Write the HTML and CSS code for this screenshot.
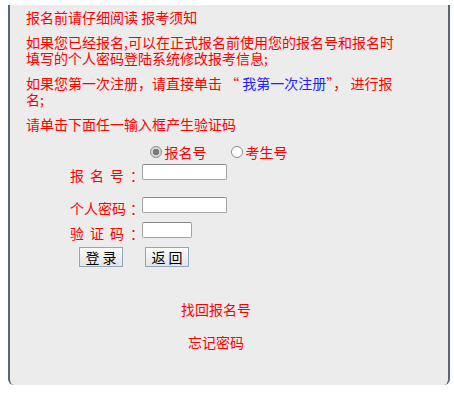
FILE: index.html
```html
<!DOCTYPE html>
<html lang="zh-CN">
<head>
    <meta charset="UTF-8">
    <title>考生登录</title>
    <link rel="stylesheet" href="styles.css">
</head>
<body>
    <div class="panel">
        <div class="notice">
            <p>报名前请仔细阅读 报考须知</p>
            <p>如果您已经报名,可以在正式报名前使用您的报名号和报名时填写的个人密码登陆系统修改报考信息;</p>
            <p><span>如果您第一次注册，请直接单击 “ </span><a href="#" class="reg">我第一次注册</a><span>”， 进行报</span><br>名;</p>
            <p>请单击下面任一输入框产生验证码</p>

            <div class="radios">
                <label><input type="radio" name="kind" checked>报名号</label>
                <label><input type="radio" name="kind">考生号</label>
            </div>

            <form class="login">
                <div class="row row-first">
                    <label class="lbl"><span class="spread">报名号</span>：</label>
                    <input type="text" class="field">
                </div>
                <div class="row row-second">
                    <label class="lbl"><span class="plain">个人密码</span>：</label>
                    <input type="password" class="field">
                </div>
                <div class="row row-third">
                    <label class="lbl"><span class="spread">验证码</span>：</label>
                    <input type="text" class="field short">
                </div>
                <div class="btns">
                    <button type="button">登 录</button>
                    <button type="button">返 回</button>
                </div>
            </form>

            <div class="links">
                <a href="#">找回报名号</a>
                <a href="#">忘记密码</a>
            </div>
        </div>
    </div>
</body>
</html>
```

FILE: styles.css
```css
* {
    box-sizing: border-box;
    margin: 0;
    padding: 0;
}

body {
    background: #ffffff;
    font-family: "Noto Sans CJK SC", sans-serif;
    font-size: 14px;
    color: #ff0000;
}

.panel {
    width: 442px;
    height: 380px;
    margin: 5px 0 0 8px;
    padding: 4px 0 0 16px;
    background: #ececec;
    border-left: 2px solid #56677c;
    border-right: 2px solid #56677c;
    border-radius: 0 0 6px 6px;
}

.notice {
    width: 380px;
}

.notice p {
    line-height: 16px;
    margin-bottom: 9px;
}

.reg {
    color: #1f1fff;
    text-decoration: none;
}

.radios {
    display: flex;
    justify-content: center;
    gap: 24px;
    margin-top: 12px;
    padding-left: 5px;
    line-height: 16px;
}

.radios label {
    display: flex;
    align-items: center;
    gap: 3px;
}

.radios input {
    appearance: none;
    width: 12px;
    height: 12px;
    border: 1px solid #8c8c8c;
    border-radius: 50%;
    background: #ffffff;
}

.radios input:checked {
    background: radial-gradient(circle, #7a7a7a 0 3px, #d8d8d8 3.5px);
}

.login {
    padding-left: 44px;
}

.row {
    display: flex;
    align-items: flex-start;
}

.row-first {
    margin-top: 4px;
}

.row-second {
    margin-top: 14px;
}

.row-third {
    margin-top: 6px;
}

.lbl {
    width: 72px;
    margin-top: 3px;
    line-height: 16px;
    white-space: nowrap;
}

.spread {
    letter-spacing: 6px;
}

.plain {
    margin-right: 4px;
}

.field {
    width: 85px;
    height: 16px;
    border: 1px solid #a4a4a4;
    border-top-color: #8a8a8a;
    border-radius: 2px;
    background: #ffffff;
}

.field.short {
    width: 50px;
}

.btns {
    display: flex;
    gap: 22px;
    margin-top: 6px;
    padding-left: 9px;
}

.btns button {
    width: 44px;
    height: 20px;
    border: 1px solid #8fa7c1;
    background: linear-gradient(#fbfbfb, #e4e4e4);
    font-family: "Noto Sans CJK SC", sans-serif;
    font-size: 14px;
    line-height: 18px;
    color: #000000;
}

.links {
    display: flex;
    flex-direction: column;
    align-items: center;
    gap: 17px;
    margin-top: 34px;
    line-height: 16px;
}

.links a {
    color: #ff0000;
    text-decoration: none;
}
```
